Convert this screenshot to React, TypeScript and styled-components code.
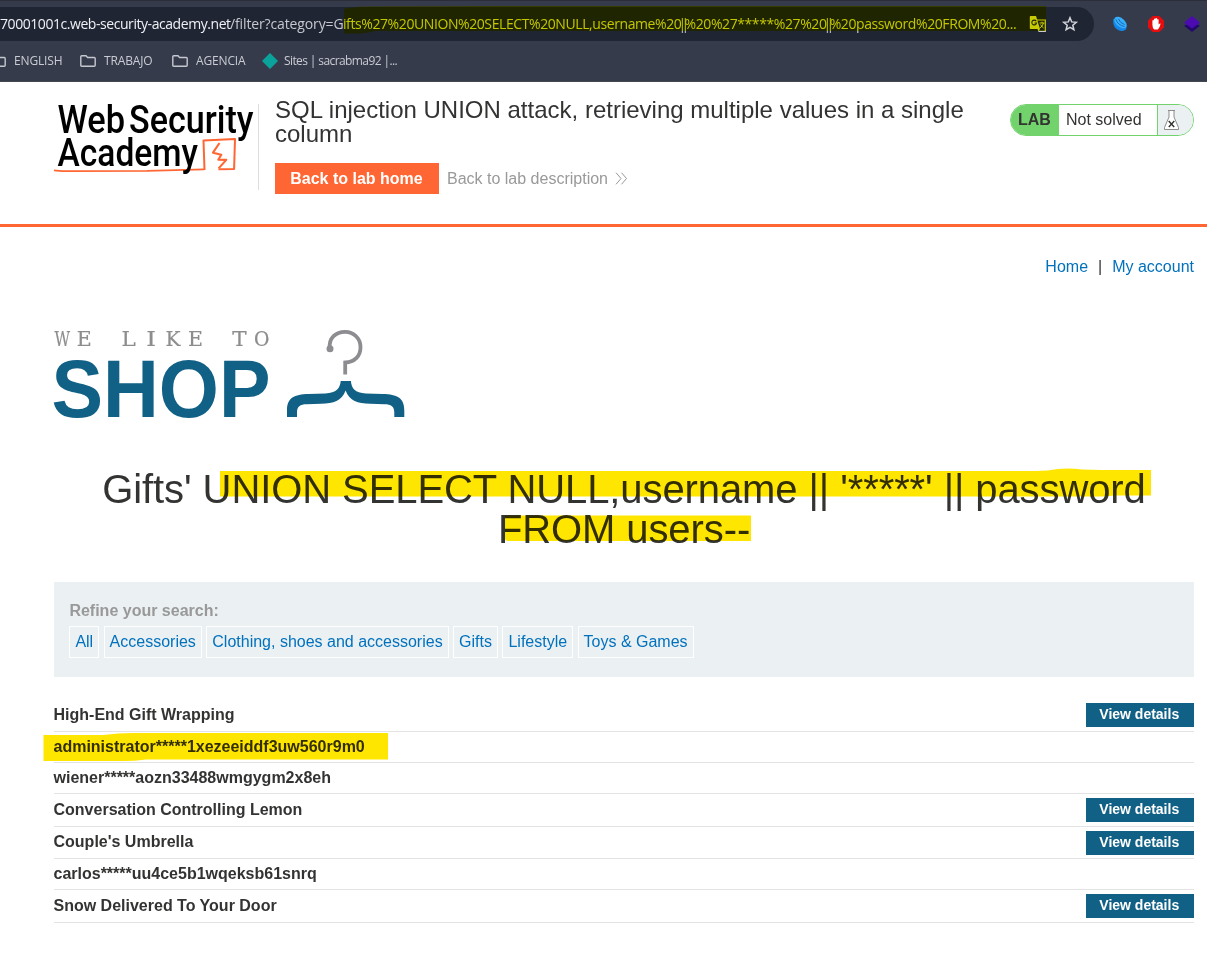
import React from "react";
import styled, { createGlobalStyle } from "styled-components";

const GlobalStyle = createGlobalStyle`
  html, body { margin: 0; padding: 0; background: #fff; }
  body { font-family: "Liberation Sans", Arial, sans-serif; font-size: 16px; color: #333332; overflow: hidden; }
  *, *::before, *::after { box-sizing: border-box; }
  svg { flex: none; overflow: visible; }
`;

const Screen = styled.div`
  position: relative;
  width: 1207px;
  height: 953px;
  overflow: hidden;
  background: #fff;
`;

/* Browser chrome */

const Chrome = styled.header`
  height: 82px;
  background: #363b4c;
  border-top: 1px solid #2b2d38;
  border-bottom: 1px solid #46484f;
  font-family: "Open Sans", "Noto Sans", sans-serif;
`;

const Toolbar = styled.div`
  display: flex;
  align-items: center;
  height: 40px;
  padding-top: 6px;
`;

const AddressBar = styled.div`
  display: flex;
  align-items: center;
  width: 1094px;
  height: 34px;
  background: #1f2533;
  border-radius: 0 17px 17px 0;
  white-space: pre;
`;

const UrlPart = styled.span<{ $width: number; $color: string; $spacing: number }>`
  flex: none;
  width: ${(p) => p.$width}px;
  color: ${(p) => p.$color};
  font-size: 14px;
  line-height: 20px;
  letter-spacing: ${(p) => p.$spacing}px;
`;

const Bars = styled.span`
  margin-left: -3px;
  letter-spacing: -4.6px;
`;

const AddressIcons = styled.div`
  display: flex;
  align-items: center;
  gap: 15px;
  margin-left: 13px;
`;

const Extensions = styled.div`
  display: flex;
  align-items: center;
  gap: 20px;
  margin-left: 18px;
`;

const Bookmarks = styled.nav`
  display: flex;
  align-items: center;
  height: 39px;
  margin-left: -10px;
`;

const Bookmark = styled.div<{ $width: number; $spacing?: number }>`
  display: flex;
  align-items: center;
  flex: none;
  gap: ${(p) => (p.$spacing ? 6 : 8)}px;
  width: ${(p) => p.$width}px;
  color: #c9ccd3;
  font-size: 12px;
  letter-spacing: ${(p) => p.$spacing ?? -0.15}px;
  white-space: nowrap;
`;

/* Lab header */

const LabHeader = styled.section`
  display: flex;
  align-items: flex-start;
  height: 145px;
  padding: 0 13px 0 54px;
  border-bottom: 3px solid #ff6633;
`;

const LogoBox = styled.div`
  width: 205px;
  height: 86px;
  margin-top: 22px;
  border-right: 1px solid #dedede;
`;

const LabInfo = styled.div`
  flex: 1;
  padding: 16px 0 0 16px;
`;

const LabTitle = styled.h2`
  width: 700px;
  margin: 0;
  font-size: 24px;
  line-height: 24px;
  font-weight: 400;
`;

const LabActions = styled.div`
  display: flex;
  align-items: center;
  gap: 8px;
  margin-top: 17px;
`;

const HomeButton = styled.a`
  width: 164px;
  height: 31px;
  padding-right: 1px;
  background: #ff6633;
  color: #fff;
  font-weight: 700;
  line-height: 31px;
  text-align: center;
`;

const DescriptionLink = styled.a`
  display: flex;
  align-items: center;
  gap: 7px;
  color: #999;
`;

const Status = styled.div`
  display: flex;
  width: 184px;
  height: 32px;
  margin-top: 22px;
  border: 1px solid #72d36d;
  border-radius: 16px;
  overflow: hidden;
  line-height: 30px;
`;

const StatusLabel = styled.b`
  width: 48px;
  padding-left: 7px;
  background: #72d36d;
`;

const StatusText = styled.span`
  width: 99px;
  padding-left: 7px;
  border-right: 1px solid #72d36d;
`;

const StatusIcon = styled.span`
  flex: 1;
  padding: 4px 0 0 4.5px;
  background: #ebf0f3;
  line-height: 0;
`;

/* Shop page */

const Page = styled.main`
  width: 1140px;
  margin-left: 54px;
`;

const TopLinks = styled.nav`
  display: flex;
  justify-content: flex-end;
  gap: 10px;
  padding-top: 30px;
  line-height: 19px;
`;

const Link = styled.a`
  color: #0071bd;
`;

const ShopLogo = styled.div`
  height: 92px;
  margin: 52px 0 0 -4px;
`;

const Heading = styled.h1`
  margin: 49px 0 0;
  font-size: 40px;
  line-height: 40px;
  font-weight: 400;
  letter-spacing: -0.09px;
  text-align: center;
`;

const Filters = styled.section`
  height: 95px;
  margin-top: 33px;
  padding: 18px 0 0 15.4px;
  background: #ebf0f3;
`;

const FilterTitle = styled.div`
  height: 26px;
  color: #999;
  font-weight: 700;
  line-height: 22px;
`;

const FilterRow = styled.div`
  display: flex;
  gap: 4.45px;
`;

const Chip = styled.a`
  height: 32px;
  padding: 0 5px;
  border: 1px solid #fff;
  color: #0071bd;
  line-height: 29px;
`;

const Products = styled.section`
  padding-top: 22.4px;
`;

const Row = styled.div<{ $tall: boolean }>`
  display: flex;
  justify-content: space-between;
  align-items: flex-start;
  height: ${(p) => (p.$tall ? 32.6 : 31)}px;
  padding-top: 4px;
  border-bottom: 1px solid #e3e3e3;
  font-weight: 700;
`;

const ProductName = styled.span<{ $tall: boolean }>`
  margin: ${(p) => (p.$tall ? 0.8 : 0)}px 0 0 -0.5px;
  line-height: 22px;
`;

const Details = styled.a`
  width: 108px;
  height: 24px;
  padding-right: 1.5px;
  background: #116085;
  color: #fff;
  font-size: 14px;
  line-height: 22px;
  text-align: center;
`;

/* Marker strokes lie over the whole window */

const Marker = styled.svg`
  position: absolute;
  inset: 0;
  pointer-events: none;
  mix-blend-mode: multiply;
`;

const FolderIcon = () => (
  <svg width="16" height="12" viewBox="0 0 16 12" fill="none" stroke="#c5c8cf" strokeWidth="1.4">
    <path d="M.8 1.800q0-1 1-1H6l1.600 1.700h6.600q1 0 1 1v6.700q0 1-1 1H1.800q-1 0-1-1z" />
  </svg>
);

const TranslateIcon = () => (
  <svg width="18" height="18" viewBox="0 0 18 18">
    <path d="M8 5h8.300v11.300H9.500" fill="none" stroke="#c9ccd3" strokeWidth="1.2" />
    <path d="M1.500 1H7l4 13H1.500Q.8 14 .8 13V2q0-1 .7-1z" fill="#c9ccd3" />
    <path d="M7.200 6.100A2.400 2.400 0 1 0 7.600 8H5.500" fill="none" stroke="#1f2533" strokeWidth="1.1" />
    <path d="M10.500 8h5M13 6.700V8m1.500 0q-.8 3-3.400 5M11.600 9.500q1 2 3 3.500" fill="none" stroke="#c9ccd3" />
    <path d="M8.500 14l1 2.400L11 14z" fill="#c9ccd3" />
  </svg>
);

const StarIcon = () => (
  <svg width="16" height="16" viewBox="0 0 16 16" fill="none" stroke="#d2d4da" strokeWidth="1.5">
    <path d="M8 1.800l1.700 4.100 4.600.4-3.500 3 1.100 4.400L8 11.300l-3.900 2.400 1.100-4.400-3.500-3 4.600-.4z" />
  </svg>
);

const BlueShellIcon = () => (
  <svg width="16" height="16" viewBox="0 0 16 16">
    <path d="M1.600 2.500C0 8 3 14.500 9.500 15c3 0 5.500-1.500 5-4.500z" fill="#1386e8" />
    <ellipse cx="8.500" cy="6.500" rx="7.300" ry="4.300" transform="rotate(40 8.500 6.500)" fill="#36aefc" />
    <path d="M4 3.500q1.500 5.500 8.500 7M6.500 3q1.500 4 6 5.500" fill="none" stroke="#1265b5" strokeWidth=".9" />
  </svg>
);

const HandIcon = () => (
  <svg width="16" height="16" viewBox="0 0 16 16">
    <path d="M4.700 0h6.600L16 4.700v6.600L11.300 16H4.700L0 11.300V4.700z" fill="#e50d0d" />
    <path
      d="M4.400 9V4.500q.8-.9 1.500 0V3q.9-.9 1.600 0v-.7q.8-.8 1.600 0V3.500q.8-.7 1.500.1v5q1.300-1.500 2-.9-.8 3.700-2.700 5.800H6.300Q4.400 12 4.400 9z"
      fill="#fff"
    />
  </svg>
);

const LayersIcon = () => (
  <svg width="16" height="16" viewBox="0 0 16 16">
    <path d="M0 9.700l8-4 8 4L8 16z" fill="#20096b" />
    <path d="M8 0l8 6.800-8 5.800-8-5.800z" fill="#4b0bb0" />
  </svg>
);

const AcademyLogo = () => (
  <svg width="204" height="74" viewBox="54 104 204 74">
    <g fill="none" stroke="#ff6633" strokeLinejoin="round">
      <path d="M54 170.400q5 .8 15 .7l78-.3 57-1.500" strokeWidth="1.700" />
      <path d="M204.500 170l-1-29.500 31.500-1.600-.9 30-15.600.3" strokeWidth="2" />
      <path d="M219.500 143l-6.500 9.700 8.300 2-3 5 8 .2-7.700 8.500" strokeWidth="2.100" />
    </g>
    <g fill="#000" fontFamily="Roboto, sans-serif" fontWeight="500" fontSize="38">
      <text x="57.500" y="132.800" textLength="67.500" lengthAdjust="spacingAndGlyphs">Web</text>
      <text x="129" y="132.800" textLength="124.500" lengthAdjust="spacingAndGlyphs">Security</text>
      <text x="57.500" y="165.500" textLength="140.500" lengthAdjust="spacingAndGlyphs">Academy</text>
    </g>
  </svg>
);

/* letter, centre x, horizontal stretch */
const LIKE_LETTERS: [string, number, number][] = [
  ["W", 62.3, 0.74],
  ["E", 84.3, 1],
  ["L", 128.7, 1.05],
  ["I", 151, 1.2],
  ["K", 173, 0.98],
  ["E", 195.5, 1],
  ["T", 239.5, 1.05],
  ["O", 261.7, 0.92],
];

const ShopArt = () => (
  <svg width="360" height="92" viewBox="50 328 360 92">
    <g fill="#8d8d8d" stroke="#8d8d8d" strokeWidth=".2" fontFamily="'DejaVu Serif', serif" fontSize="20.5" textAnchor="middle">
      {LIKE_LETTERS.map(([letter, x, stretch]) => (
        <text key={x} transform={`translate(${x} 345.5) scale(${stretch} 1)`}>
          {letter}
        </text>
      ))}
    </g>
    <text x="51.500" y="417" fill="#116085" fontFamily="Liberation Sans, sans-serif" fontWeight="700" fontSize="81" textLength="219" lengthAdjust="spacingAndGlyphs">
      SHOP
    </text>
    <path d="M329.800 348.500C328.500 338 336 331.800 345 331.800a15.200 15.200 0 0 1 15.500 15.500c0 9-6 15-15.300 15.200V374.500" fill="none" stroke="#8d8d91" strokeWidth="3.800" />
    <circle cx="330" cy="348.700" r="3.500" fill="#8d8d91" />
    <path
      d="M340.700 381h10.200c.5 7 4 12 15 12.500l17 .5c14 .5 21.400 3.500 21.400 16.500v6.500h-10v-4.500c0-6-3-8.300-10-8.300l-14-.4c-13-.3-20.500-2.500-24.700-13.300-4.200 10.800-11.700 13-24.700 13.300l-14 .4c-7 0-9.900 2.300-9.900 8.300v4.500h-10v-6.500c0-13 7.400-16 21.400-16.500l17-.5c11-.5 14.800-5.500 15.300-12.500z"
      fill="#116085"
    />
  </svg>
);

const FlaskIcon = () => (
  <svg width="18" height="22" viewBox="0 0 18 22">
    <path d="M6 1.500V8L1.500 18.500v2h14v-2L11 8V1.500" fill="#fff" stroke="#8a8d8a" />
    <path d="M5 1.500h7" stroke="#8a8d8a" strokeWidth="1.200" />
    <path d="M5.700 12l5.500 6M11.300 12l-5.500 6" stroke="#333332" strokeWidth="1.400" />
  </svg>
);

const PRODUCTS = [
  { name: "High-End Gift Wrapping", details: true },
  { name: "administrator*****1xezeeiddf3uw560r9m0", details: false },
  { name: "wiener*****aozn33488wmgygm2x8eh", details: false },
  { name: "Conversation Controlling Lemon", details: true },
  { name: "Couple's Umbrella", details: true },
  { name: "carlos*****uu4ce5b1wqeksb61snrq", details: false },
  { name: "Snow Delivered To Your Door", details: true },
];

const CATEGORIES = ["All", "Accessories", "Clothing, shoes and accessories", "Gifts", "Lifestyle", "Toys & Games"];

export default function App() {
  return (
    <Screen>
      <GlobalStyle />
      <Chrome>
        <Toolbar>
          <AddressBar>
            <UrlPart $width={230} $color="#f0f1f4" $spacing={-0.44}>70001001c.web-security-academy.net</UrlPart>
            <UrlPart $width={113} $color="#c5c8cf" $spacing={-0.13}>/filter?category=G</UrlPart>
            <UrlPart $width={673} $color="#c5c8cf" $spacing={-0.41}>
              ifts%27%20UNION%20SELECT%20NULL,username%20<Bars>||</Bars>%20%27*****%27%20<Bars>||</Bars>%20password%20FROM%20...
            </UrlPart>
            <AddressIcons>
              <TranslateIcon />
              <StarIcon />
            </AddressIcons>
          </AddressBar>
          <Extensions>
            <BlueShellIcon />
            <HandIcon />
            <LayersIcon />
          </Extensions>
        </Toolbar>
        <Bookmarks>
          <Bookmark $width={90} $spacing={undefined}><FolderIcon />ENGLISH</Bookmark>
          <Bookmark $width={92}><FolderIcon />TRABAJO</Bookmark>
          <Bookmark $width={90}><FolderIcon />AGENCIA</Bookmark>
          <Bookmark $width={140} $spacing={-0.6}>
            <svg width="16" height="16" viewBox="0 0 16 16"><path d="M8 0l8 8-8 8-8-8z" fill="#0aa39c" /></svg>
            Sites | sacrabma92 |...
          </Bookmark>
        </Bookmarks>
      </Chrome>

      <LabHeader>
        <LogoBox><AcademyLogo /></LogoBox>
        <LabInfo>
          <LabTitle>SQL injection UNION attack, retrieving multiple values in a single column</LabTitle>
          <LabActions>
            <HomeButton>Back to lab home</HomeButton>
            <DescriptionLink>
              Back to lab description
              <svg width="13" height="13" viewBox="0 0 13 13" fill="none" stroke="#999"><path d="M1 .7l5 5.800-5 5.800M6.500.7l5 5.800-5 5.800" /></svg>
            </DescriptionLink>
          </LabActions>
        </LabInfo>
        <Status>
          <StatusLabel>LAB</StatusLabel>
          <StatusText>Not solved</StatusText>
          <StatusIcon><FlaskIcon /></StatusIcon>
        </Status>
      </LabHeader>

      <Page>
        <TopLinks>
          <Link>Home</Link>
          <span>|</span>
          <Link>My account</Link>
        </TopLinks>
        <ShopLogo><ShopArt /></ShopLogo>
        <Heading>Gifts' UNION SELECT NULL,username || '*****' || password FROM users--</Heading>
        <Filters>
          <FilterTitle>Refine your search:</FilterTitle>
          <FilterRow>
            {CATEGORIES.map((name) => <Chip key={name}>{name}</Chip>)}
          </FilterRow>
        </Filters>
        <Products>
          {PRODUCTS.map((p) => (
            <Row key={p.name} $tall={p.details}>
              <ProductName $tall={p.details}>{p.name}</ProductName>
              {p.details && <Details>View details</Details>}
            </Row>
          ))}
        </Products>
      </Page>

      <Marker width="1207" height="953" viewBox="0 0 1207 953">
        <path d="M344 9q6-2 24-2.500L500 6h546v25H376q-10 3-32 2.500z" fill="#ffff00" />
        <g fill="#ffe600">
          <path d="M220 471h816q12 0 22-2 12-1 24 .5l20 .5h49v25.500h-36l-12 1H220z" />
          <path d="M505 515.500h246V541H508q-3 0-3-3z" />
          <path d="M43.500 735h60q14-2 30-2h254.500v26.500H146q-12 1.500-22 1.500H43.500z" />
        </g>
      </Marker>
    </Screen>
  );
}
